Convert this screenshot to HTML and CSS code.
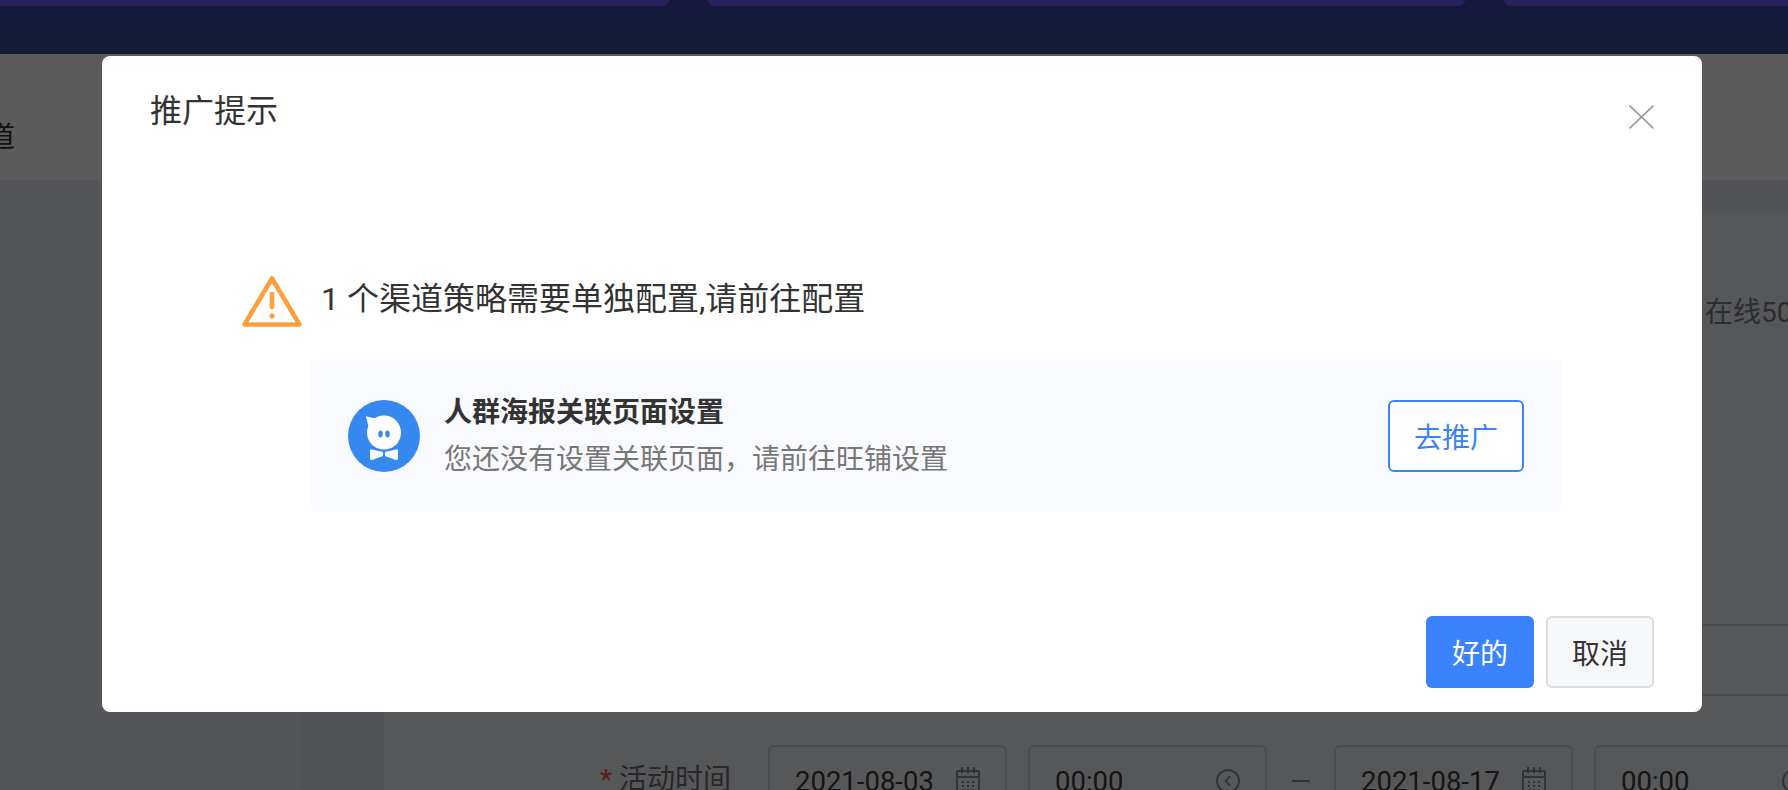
FILE: index.html
```html
<!DOCTYPE html>
<html lang="zh-CN">
<head>
    <meta charset="UTF-8">
    <meta name="viewport" content="width=device-width, initial-scale=1.0">
    <title>推广提示</title>
    <link rel="stylesheet" href="styles.css">
</head>
<body>
    <!-- Page behind the dialog -->
    <div class="page">
        <div class="topbar">
            <div class="top-card top-card-first"></div>
            <div class="top-card"></div>
            <div class="top-card"></div>
        </div>
        <div class="sub-nav"></div>
        <div class="tab-row"><span class="tab-label">渠道</span></div>
        <div class="main">
            <div class="side-menu"></div>
            <div class="gutter-mid"></div>
            <div class="content">
                <p class="notice">在线50</p>
                <div class="field-wide"></div>
                <div class="time-row">
                    <label class="time-label"><span class="required">*</span> 活动时间</label>
                    <div class="field">
                        <span>2021-08-03</span>
                        <svg class="field-icon" viewBox="0 0 24 28" fill="none" stroke="currentColor" stroke-width="2">
                            <rect x="1" y="4" width="22" height="23" rx="1"/>
                            <path d="M1 10h22M6 0v6M12 0v6M18 0v6"/>
                            <path d="M6 15h2M11 15h2M16 15h2M6 19h2M11 19h2M16 19h2M6 23h2M11 23h2M16 23h2"/>
                        </svg>
                    </div>
                    <div class="field">
                        <span>00:00</span>
                        <svg class="field-icon" viewBox="0 0 24 28" fill="none" stroke="currentColor" stroke-width="2">
                            <circle cx="12" cy="14" r="11"/>
                            <path d="M14 9l-4 5 4 5"/>
                        </svg>
                    </div>
                    <div class="dash"></div>
                    <div class="field">
                        <span>2021-08-17</span>
                        <svg class="field-icon" viewBox="0 0 24 28" fill="none" stroke="currentColor" stroke-width="2">
                            <rect x="1" y="4" width="22" height="23" rx="1"/>
                            <path d="M1 10h22M6 0v6M12 0v6M18 0v6"/>
                            <path d="M6 15h2M11 15h2M16 15h2M6 19h2M11 19h2M16 19h2M6 23h2M11 23h2M16 23h2"/>
                        </svg>
                    </div>
                    <div class="field">
                        <span>00:00</span>
                        <svg class="field-icon" viewBox="0 0 24 28" fill="none" stroke="currentColor" stroke-width="2">
                            <circle cx="12" cy="14" r="11"/>
                            <path d="M14 9l-4 5 4 5"/>
                        </svg>
                    </div>
                </div>
            </div>
        </div>
    </div>

    <!-- Dialog -->
    <div class="overlay">
        <div class="dialog">
            <h2 class="dialog-title">推广提示</h2>
            <svg class="dialog-close" viewBox="0 0 25 24" fill="none" stroke="#9b9b9b" stroke-width="1.7">
                <path d="M0.6 0.6L24.4 23.4M24.4 0.6L0.6 23.4"/>
            </svg>

            <div class="warn-row">
                <svg class="warn-icon" viewBox="0 0 60 53" fill="none" stroke="#ff9f40" stroke-width="4.6" stroke-linejoin="round" stroke-linecap="round">
                    <path d="M30 3.5L57.5 49.5H2.5Z"/>
                    <path d="M30 19V32"/>
                    <circle cx="30" cy="41" r="2.6" fill="#ff9f40" stroke="none"/>
                </svg>
                <p class="warn-text">1 个渠道策略需要单独配置,请前往配置</p>
            </div>

            <div class="promo-card">
                <svg class="promo-avatar" viewBox="0 0 72 72">
                    <circle cx="36" cy="36" r="36" fill="#3588ee"/>
                    <circle cx="36" cy="32.5" r="17" fill="#fff"/>
                    <path d="M18 17Q17.5 16 19 16.5L29 19L21 28Z" fill="#fff"/>
                    <path d="M21 40Q24 48.5 36 48.5T51 40Z" fill="#fff"/>
                    <ellipse cx="32.5" cy="34" rx="2.2" ry="3.4" fill="#3588ee"/>
                    <ellipse cx="39.5" cy="34" rx="2.2" ry="3.4" fill="#3588ee"/>
                    <path d="M22 50.5Q22 49 24 49.5L35 52V56L24 60Q22 60.5 22 58.5Z" fill="#fff"/>
                    <path d="M50 50.5Q50 49 48 49.5L37 52V56L48 60Q50 60.5 50 58.5Z" fill="#fff"/>
                </svg>
                <div class="promo-text">
                    <h3>人群海报关联页面设置</h3>
                    <p>您还没有设置关联页面，请前往旺铺设置</p>
                </div>
                <button class="promo-btn">去推广</button>
            </div>

            <div class="dialog-footer">
                <button class="btn btn-primary">好的</button>
                <button class="btn btn-default">取消</button>
            </div>
        </div>
    </div>
</body>
</html>
```

FILE: styles.css
```css
* {
    margin: 0;
    padding: 0;
    box-sizing: border-box;
    font-family: Roboto, 'Noto Sans CJK SC', sans-serif;
}

body {
    width: 1788px;
    height: 790px;
    overflow: hidden;
    position: relative;
    background-color: #eef1f6;
}

/* Page behind the dialog */
.page {
    width: 100%;
    height: 100%;
    display: flex;
    flex-direction: column;
    overflow: hidden;
}

.topbar {
    height: 54px;
    flex-shrink: 0;
    display: flex;
    gap: 39px;
    margin-left: -88px;
    background: linear-gradient(180deg, #3f44a8, #315192);
}

.top-card {
    width: 757px;
    height: 6px;
    flex-shrink: 0;
    background-color: #6f5fff;
    border-radius: 0 0 6px 6px;
}

.sub-nav {
    height: 42px;
    flex-shrink: 0;
    background-color: #f6f8f6;
}

.tab-row {
    height: 84px;
    flex-shrink: 0;
    background-color: #fbfdfd;
    overflow: hidden;
}

.tab-label {
    display: block;
    margin-left: -41px;
    font-size: 28px;
    line-height: 84px;
    color: #2e2e2e;
}

.main {
    flex: 1;
    display: flex;
    background-color: #e3e6f1;
}

.side-menu {
    width: 298px;
    background-color: #e8ebf3;
}

.gutter-mid {
    width: 86px;
}

.content {
    flex: 1;
    margin-top: 33px;
    background-color: #eef1f6;
    overflow: hidden;
}

.notice {
    padding: 80px 0 0 1321px;
    font-size: 28px;
    line-height: 40px;
    color: #7a7d82;
    white-space: nowrap;
}

.field-wide {
    margin: 291px 0 0 384px;
    width: 1200px;
    height: 72px;
    border: 2px solid #cfd2d8;
    border-radius: 6px;
}

.time-row {
    margin-top: 49px;
    display: flex;
    width: 1600px;
}

.time-label {
    width: 347px;
    margin-right: 37px;
    flex-shrink: 0;
    text-align: right;
    font-size: 28px;
    line-height: 70px;
    color: #6c6e74;
}

.required {
    color: #ff4d4f;
}

.field {
    width: 239px;
    height: 72px;
    flex-shrink: 0;
    display: flex;
    align-items: center;
    justify-content: space-between;
    margin-right: 21px;
    padding: 0 25px;
    border: 2px solid #cfd2d8;
    border-radius: 6px;
    font-size: 27.5px;
    color: #3a3a3a;
}

.field-icon {
    width: 24px;
    height: 28px;
    color: #8b8d92;
}

.dash {
    width: 18px;
    height: 2px;
    flex-shrink: 0;
    align-self: center;
    margin: 0 24px 0 4px;
    background-color: #8b8d92;
}

/* Dialog */
.overlay {
    position: absolute;
    top: 0;
    left: 0;
    width: 100%;
    height: 100%;
    padding: 56px 0 0 102px;
    background-color: rgba(0, 0, 0, 0.64);
}

.dialog {
    position: relative;
    width: 1600px;
    height: 656px;
    display: flex;
    flex-direction: column;
    background-color: white;
    border-radius: 8px;
}

.dialog-title {
    padding: 35px 48px 0;
    font-size: 32px;
    font-weight: 400;
    line-height: 40px;
    color: #333;
}

.dialog-close {
    position: absolute;
    top: 49px;
    right: 48px;
    width: 25px;
    height: 24px;
}

.warn-row {
    margin: 144px 0 32px 140px;
    display: flex;
    align-items: center;
    gap: 19px;
}

.warn-icon {
    width: 60px;
    height: 53px;
}

.warn-text {
    font-size: 32px;
    line-height: 46px;
    margin-top: -6px;
    color: #333;
}

.promo-card {
    margin-left: 208px;
    width: 1252px;
    height: 152px;
    display: flex;
    align-items: center;
    padding: 0 38px;
    background-color: #f9fafd;
    border-radius: 8px;
}

.promo-avatar {
    width: 72px;
    height: 72px;
}

.promo-text {
    flex: 1;
    margin-left: 24px;
}

.promo-text h3 {
    font-size: 28px;
    font-weight: 700;
    line-height: 47px;
    color: #333;
}

.promo-text p {
    font-size: 28px;
    line-height: 47px;
    color: #777;
}

.promo-btn {
    width: 136px;
    height: 72px;
    font-size: 28px;
    color: #3b82f6;
    background-color: white;
    border: 2px solid #3b82f6;
    border-radius: 6px;
}

.dialog-footer {
    margin-top: auto;
    padding: 0 48px 24px;
    display: flex;
    justify-content: flex-end;
    gap: 12px;
}

.btn {
    width: 108px;
    height: 72px;
    font-size: 28px;
    border-radius: 6px;
}

.btn-primary {
    color: white;
    background-color: #3b82ff;
    border: none;
}

.btn-default {
    color: #333;
    background-color: #f5f7f9;
    border: 2px solid #dcdfe3;
}
```
